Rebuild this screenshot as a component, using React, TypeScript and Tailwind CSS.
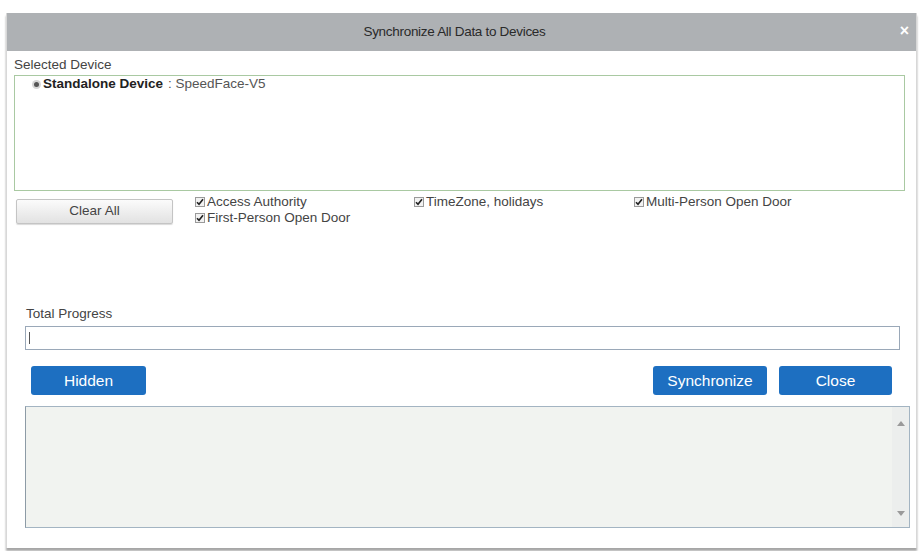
import React from "react";

function Check({ label }: { label: string }) {
  return (
    <div className="flex items-center gap-[2px] h-[16px]">
      <span className="w-[10px] h-[10px] border border-[#9a9a9a] bg-[#f2f2f2] flex items-center justify-center">
        <svg width="8" height="8" viewBox="0 0 8 8">
          <path d="M1 4.2 L3 6.3 L7 1.2" stroke="#222" strokeWidth="1.6" fill="none" />
        </svg>
      </span>
      <span>{label}</span>
    </div>
  );
}

export default function App() {
  return (
    <div
      className="w-[921px] h-[551px] bg-white overflow-hidden pt-[13px] pl-[6px] pr-[4px]"
      style={{ fontFamily: '"Liberation Sans", Arial, sans-serif' }}
    >
      <div className="w-[911px] h-[535px] bg-white border-l border-r border-[#d8d8d8] shadow-[0_3px_2px_rgba(0,0,0,0.35)] flex flex-col text-[13.5px] text-[#333]">
        <div className="h-[38px] bg-[#aeb1b4] flex items-center justify-center relative shrink-0">
          <span className="text-[13.5px] text-[#2a2a2a] tracking-[-0.3px] mr-[14px]">Synchronize All Data to Devices</span>
          <span className="absolute right-[7px] top-[10px] text-white text-[16px] font-bold leading-none">×</span>
        </div>
        <div className="pl-[7px] pt-[6px] leading-[15px] text-[#444]">Selected Device</div>
        <div className="ml-[7px] mr-[11px] h-[116px] border border-[#a9c9a2] mt-[3px] pt-[1px] pl-[17px]">
          <div className="flex items-center h-[15px]">
            <span className="w-[9px] h-[9px] rounded-full bg-[#d6d6d6] flex items-center justify-center mr-[2px]">
              <span className="w-[5px] h-[5px] rounded-full bg-[#555]" />
            </span>
            <span className="font-bold text-[#222]">Standalone Device</span>
            <span className="ml-[5px] text-[#555]">: SpeedFace-V5</span>
          </div>
        </div>
        <div className="flex mt-[7px] pl-[9px]">
          <div className="w-[157px] h-[25px] border border-[#c4c4c4] rounded-[2px] bg-gradient-to-b from-[#fbfbfb] to-[#e2e2e2] flex items-center justify-center text-[#444] shadow-[0_1px_1px_rgba(0,0,0,0.15)] mt-[1px]">
            Clear All
          </div>
          <div className="ml-[22px] mt-[-4px] grid grid-cols-[219px_220px_220px] text-[#444]">
            <Check label="Access Authority" />
            <Check label="TimeZone, holidays" />
            <Check label="Multi-Person Open Door" />
            <Check label="First-Person Open Door" />
          </div>
        </div>
        <div className="mt-[80px] pl-[19px] leading-[15px] text-[#444]">Total Progress</div>
        <div className="ml-[18px] mr-[16px] h-[24px] border border-[#9aa8b8] mt-[5px] flex items-center pl-[3px]">
          <span className="w-[1px] h-[12px] bg-[#555]" />
        </div>
        <div className="flex items-center justify-between mt-[16px] pl-[24px] pr-[24px]">
          <div className="w-[115px] h-[29px] rounded-[3px] bg-[#1d6fc1] text-white text-[15.5px] flex items-center justify-center">Hidden</div>
          <div className="flex gap-[12px]">
            <div className="w-[114px] h-[29px] rounded-[3px] bg-[#1d6fc1] text-white text-[15.5px] flex items-center justify-center">Synchronize</div>
            <div className="w-[113px] h-[29px] rounded-[3px] bg-[#1d6fc1] text-white text-[15.5px] flex items-center justify-center">Close</div>
          </div>
        </div>
        <div className="ml-[18px] mr-[6px] mt-[11px] h-[122px] border border-[#a3b4c2] border-l-[#8d9ba6] bg-[#f1f3f0] flex justify-end">
          <div className="w-[17px] bg-[#eceeed] flex flex-col items-center justify-between pt-[14px] pb-[11px]">
            <span className="w-0 h-0 border-l-[4px] border-r-[4px] border-b-[5px] border-l-transparent border-r-transparent border-b-[#9a9a9a]" />
            <span className="w-0 h-0 border-l-[4px] border-r-[4px] border-t-[5px] border-l-transparent border-r-transparent border-t-[#9a9a9a]" />
          </div>
        </div>
      </div>
    </div>
  );
}
